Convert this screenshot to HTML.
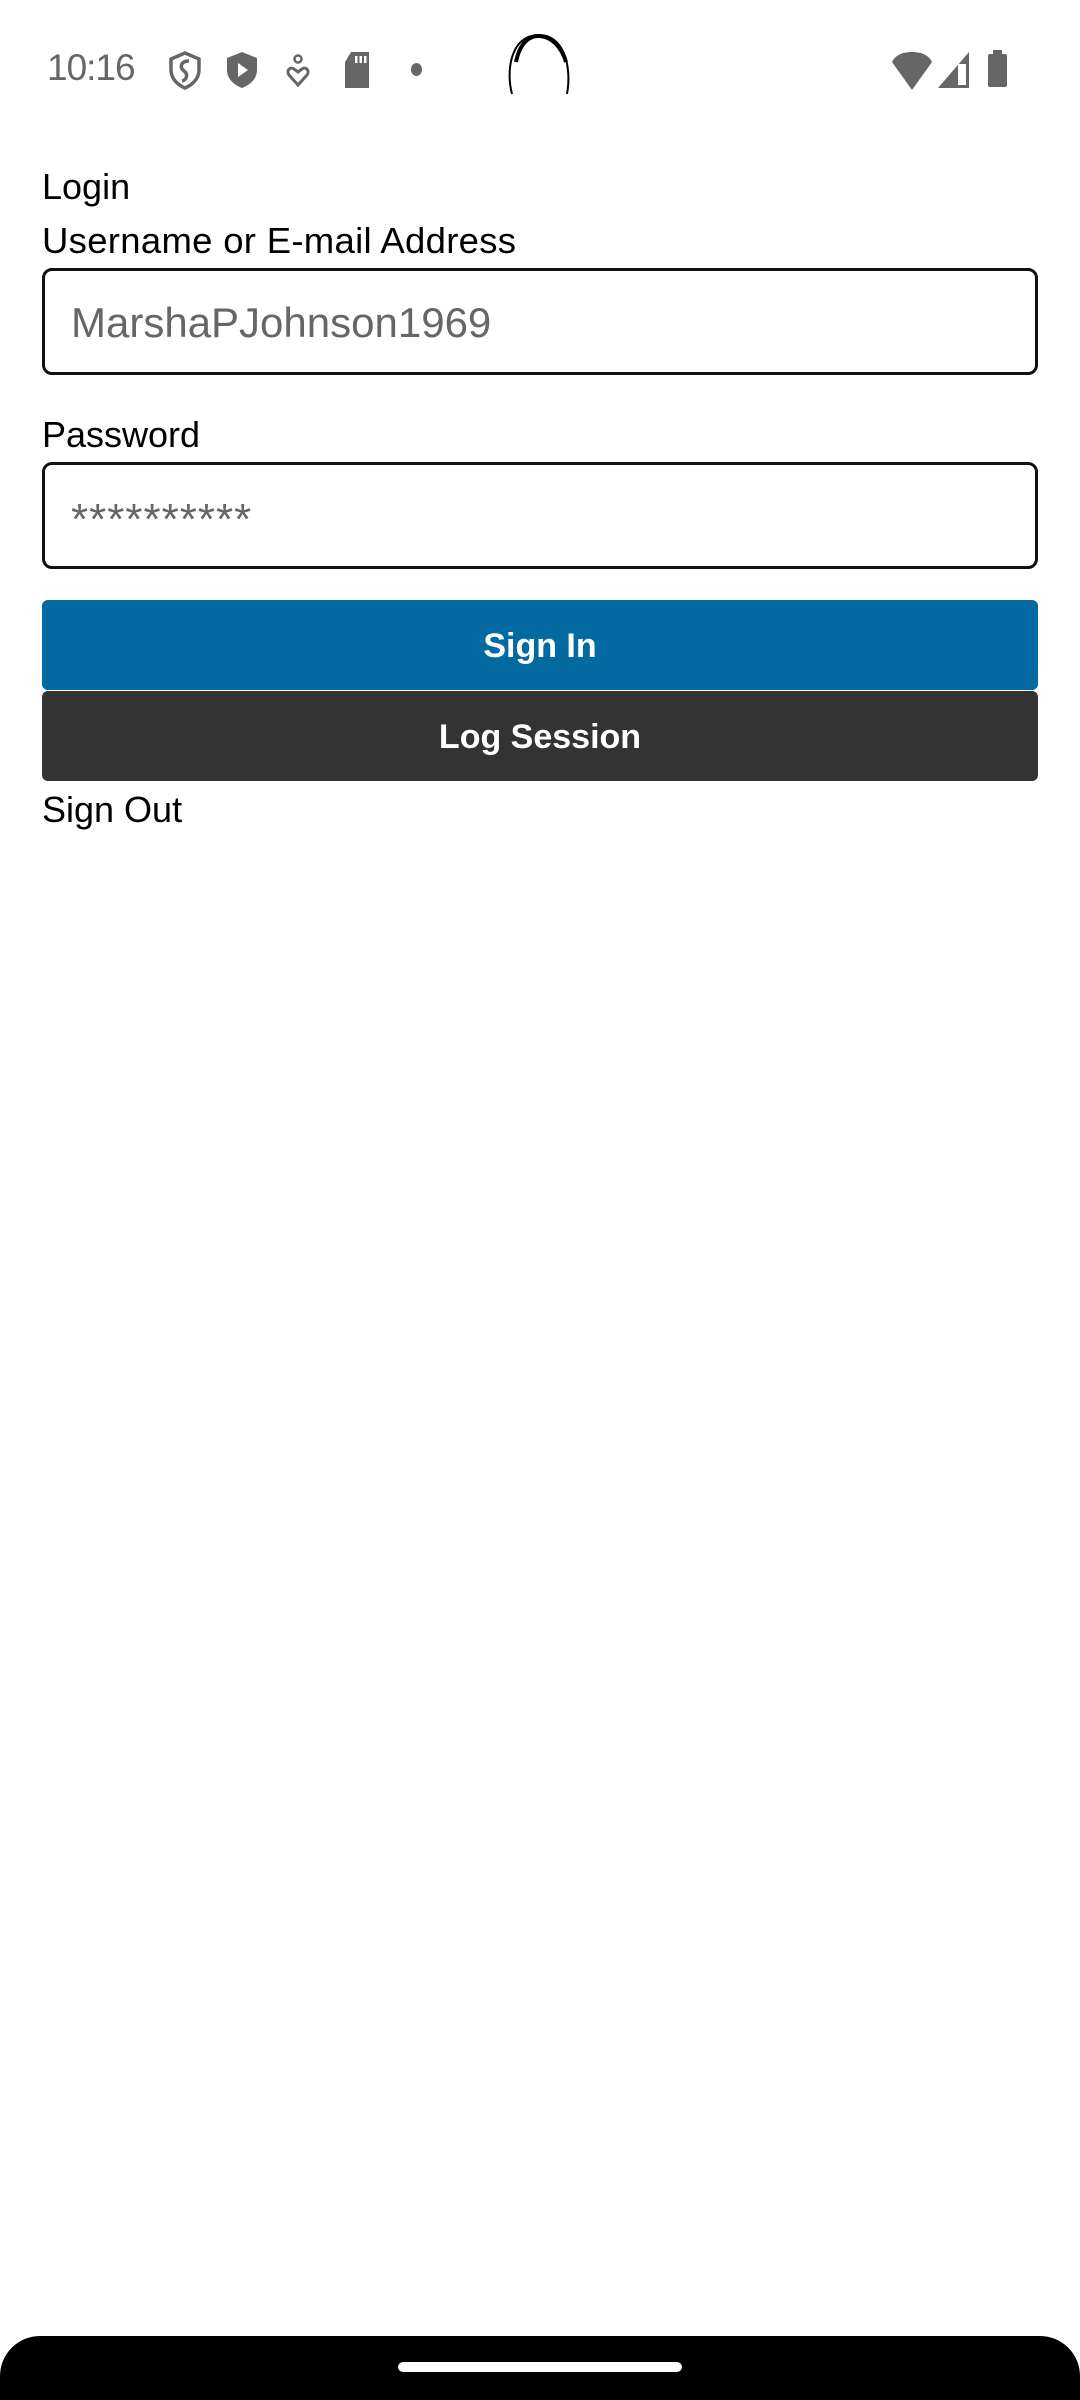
<!DOCTYPE html>
<html><head><meta charset="utf-8"><style>
*{margin:0;padding:0;box-sizing:border-box}
body{width:1080px;height:2400px;background:#fff;position:relative;overflow:hidden;font-family:"Liberation Sans",Roboto,sans-serif;color:#000}
.a{position:absolute}
.lbl{position:absolute;left:42px;font-size:35px;line-height:40px}
.box{position:absolute;left:42px;width:996px;height:107px;border:3px solid #111;border-radius:10px}
.ph{position:absolute;left:26px;font-size:42px;color:#666}
.btn{position:absolute;left:42px;width:996px;height:90px;border-radius:6px;color:#fff;font-weight:bold;font-size:34px;text-align:center;line-height:92px}
</style></head><body>
<div class="a" style="left:47px;top:47px;font-size:37px;color:#666;letter-spacing:-1px">10:16</div>
<svg class="a" style="left:165px;top:50px" width="40" height="40" viewBox="0 0 40 40"><path d="M20 3 L34 9 V20 C34 29 27 35 20 38 C13 35 6 29 6 20 V9 Z" fill="none" stroke="#666" stroke-width="3.5"/><path d="M24 11 C16 11 14 17 19 21 C24 25 21 30 17 31" fill="none" stroke="#666" stroke-width="3.5"/></svg>
<svg class="a" style="left:222px;top:50px" width="40" height="40" viewBox="0 0 40 40"><path d="M20 2 L35 8 V20 C35 29 28 35 20 38 C12 35 5 29 5 20 V8 Z" fill="#666"/><path d="M16 13 L26 20 L16 27 Z" fill="#fff"/></svg>
<svg class="a" style="left:283px;top:54px" width="30" height="34" viewBox="0 0 30 34"><circle cx="15" cy="5" r="3.5" fill="none" stroke="#666" stroke-width="2.5"/><path d="M15 31 L6 21 C3 17 7 12 11 15 L15 18 L19 15 C23 12 27 17 24 21 Z" fill="none" stroke="#666" stroke-width="3"/></svg>
<svg class="a" style="left:343px;top:52px" width="28" height="36" viewBox="0 0 28 36"><path d="M8 0 H26 V36 H2 V10 Z" fill="#666"/><rect x="12" y="4" width="2.5" height="7" fill="#fff"/><rect x="16.5" y="4" width="2.5" height="7" fill="#fff"/><rect x="21" y="4" width="2.5" height="7" fill="#fff"/></svg>
<div class="a" style="left:411px;top:63px;width:11px;height:13px;border-radius:50%;background:#666"></div>
<svg class="a" style="left:504px;top:32px" width="70" height="65" viewBox="0 0 70 65"><path d="M8 62 C2 40 6 4 34 3 C60 2 68 35 63 62" fill="none" stroke="#000" stroke-width="2"/><path d="M12 30 C16 10 26 4 34 4 C48 4 58 16 62 30" fill="none" stroke="#000" stroke-width="4"/></svg>
<svg class="a" style="left:890px;top:50px" width="44" height="40" viewBox="0 0 44 40"><path d="M2 12 C6 4 14 2 22 2 C30 2 38 4 42 12 L22 40 Z" fill="#666"/></svg>
<svg class="a" style="left:936px;top:50px" width="34" height="38" viewBox="0 0 34 38"><path d="M33 2 V38 H2 Z" fill="#666"/><rect x="22" y="14" width="8" height="21" fill="#fff"/></svg>
<div class="a" style="left:988px;top:54px;width:19px;height:33px;background:#666;border-radius:2px"></div>
<div class="a" style="left:993px;top:50px;width:9px;height:5px;background:#666"></div>

<div class="lbl" style="top:167px;font-size:36px">Login</div>
<div class="lbl" style="top:221px;font-size:36.5px;letter-spacing:0.3px">Username or E-mail Address</div>
<div class="box" style="top:268px"><div class="ph" style="top:28px">MarshaPJohnson1969</div></div>
<div class="lbl" style="top:415px;font-size:36px">Password</div>
<div class="box" style="top:462px"><div class="ph" style="top:30px;font-size:44px;letter-spacing:1px">**********</div></div>
<div class="btn" style="top:600px;background:#0369a1">Sign In</div>
<div class="btn" style="top:691px;background:#333">Log Session</div>
<div class="lbl" style="top:790px;font-size:36px">Sign Out</div>

<div class="a" style="left:0;top:2336px;width:1080px;height:64px;background:#000;border-radius:40px 40px 0 0"></div>
<div class="a" style="left:398px;top:2362px;width:284px;height:10px;background:#fff;border-radius:5px"></div>
</body></html>
